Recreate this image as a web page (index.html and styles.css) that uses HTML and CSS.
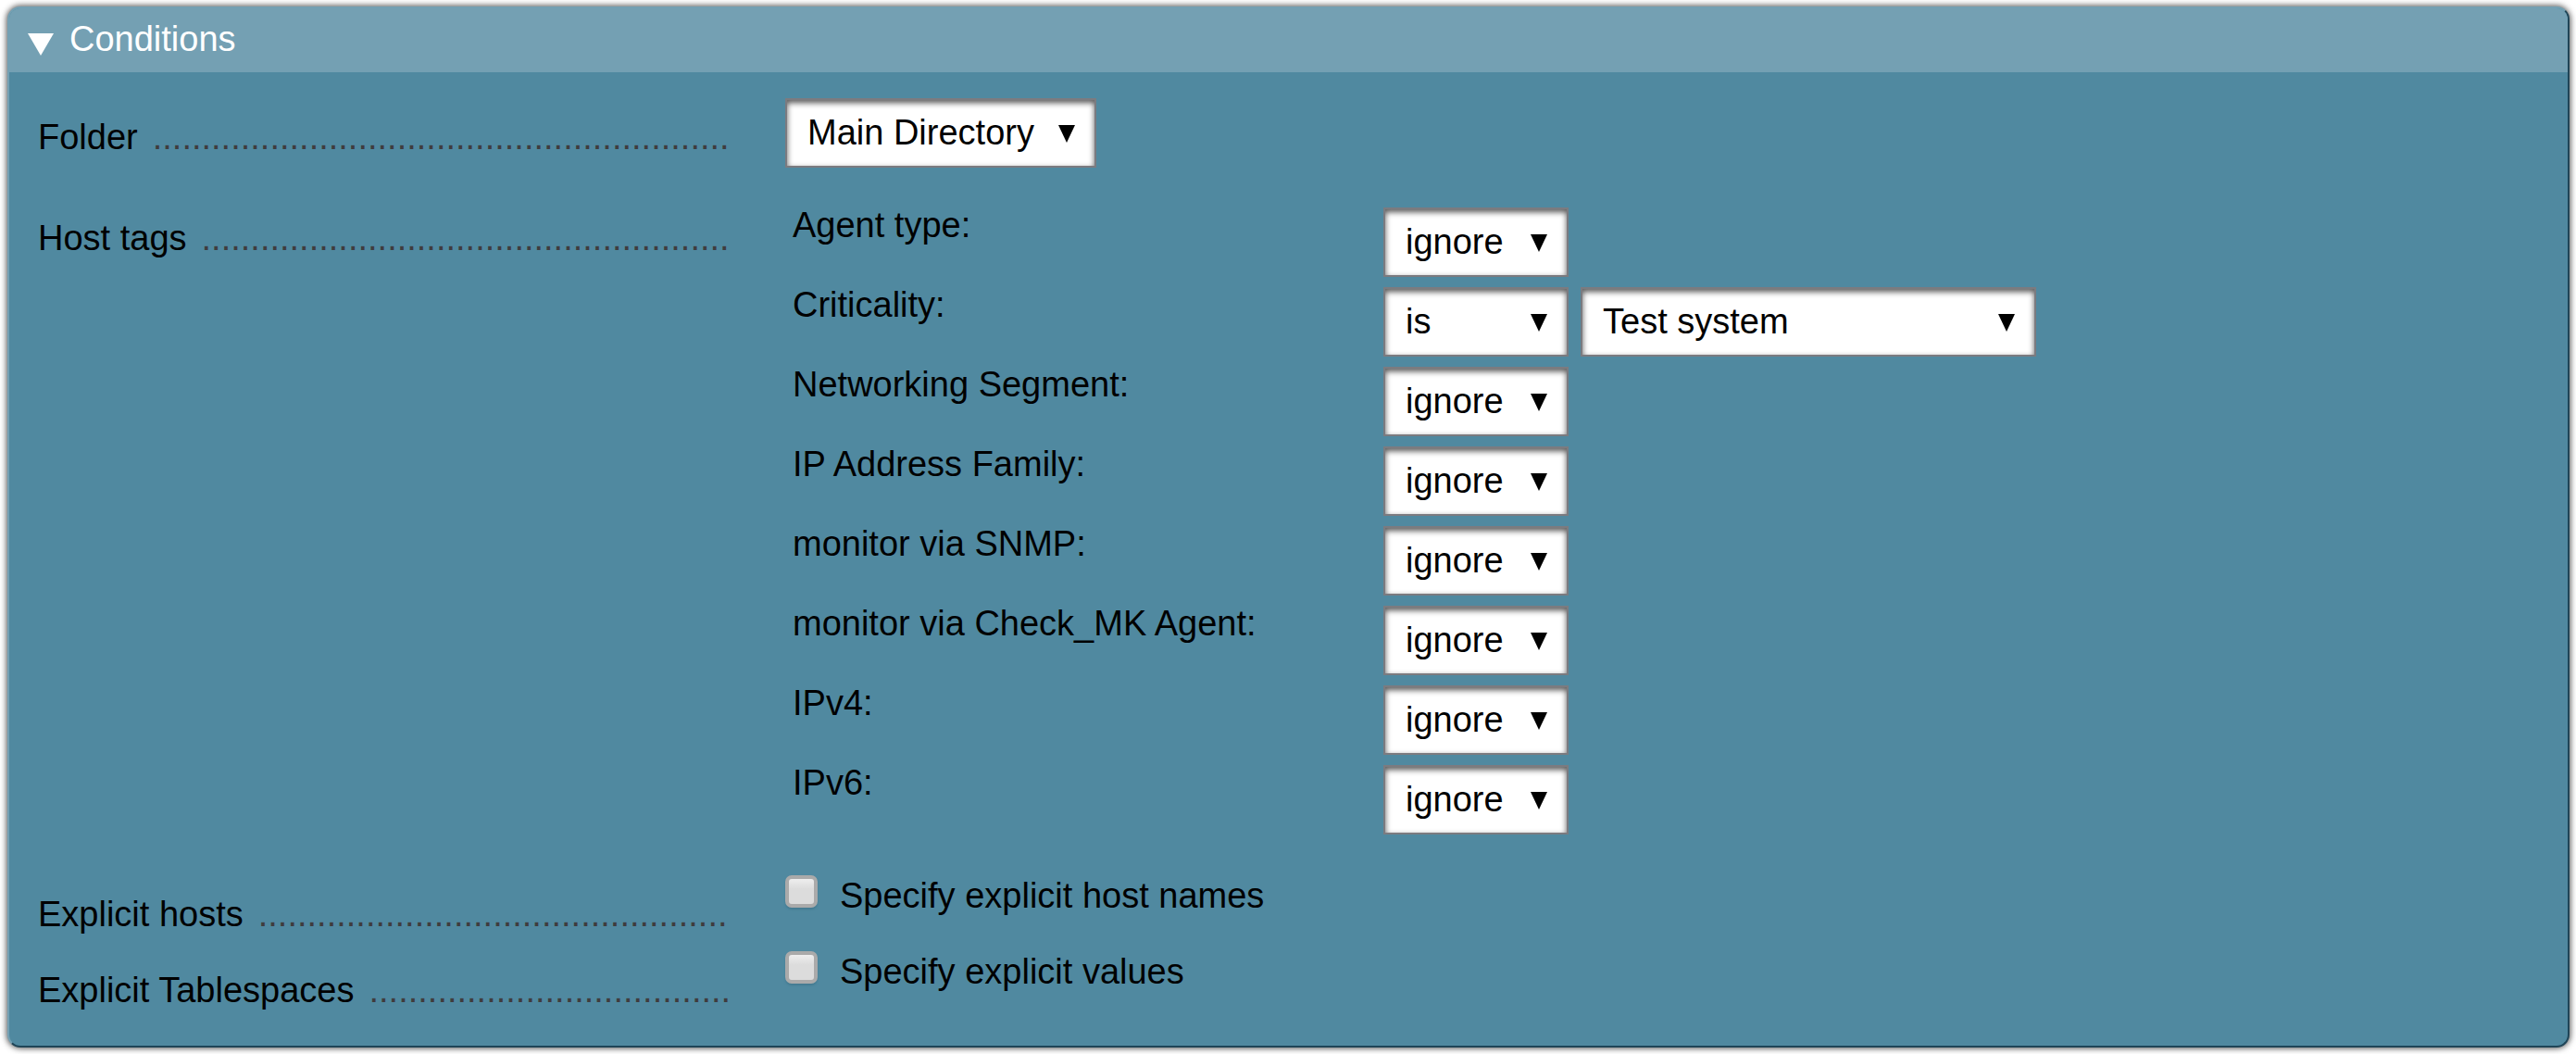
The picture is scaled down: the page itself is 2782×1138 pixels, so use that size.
FILE: index.html
```html
<!DOCTYPE html>
<html lang="en">
<head>
<meta charset="utf-8">
<title>Conditions</title>
<link rel="stylesheet" href="styles.css">
</head>
<body>
<form class="panel">
  <button class="panel-header" type="button" aria-expanded="true">
    <svg class="panel-toggle" viewBox="0 0 28 24" aria-hidden="true"><path d="M0 0H28L14 24Z"/></svg>
    <span>Conditions</span>
  </button>
  <div class="panel-body">
    <div class="row row-folder">
      <label class="legend" for="folder"><span>Folder</span><span class="dots" aria-hidden="true">...........................................................</span></label>
      <div class="field">
        <select id="folder" class="select select-folder"><option>Main Directory</option></select>
      </div>
    </div>
    <div class="row">
      <div class="legend"><span>Host tags</span><span class="dots" aria-hidden="true">......................................................</span></div>
      <div class="field tags">
        <div class="tag">
          <label for="agent">Agent type:</label>
          <select id="agent" class="select select-mode"><option>ignore</option><option>is</option></select>
        </div>
        <div class="tag">
          <label for="criticality">Criticality:</label>
          <select id="criticality" class="select select-mode"><option>is</option><option>ignore</option></select>
          <select class="select select-value" aria-label="Criticality value"><option>Test system</option></select>
        </div>
        <div class="tag">
          <label for="networking">Networking Segment:</label>
          <select id="networking" class="select select-mode"><option>ignore</option><option>is</option></select>
        </div>
        <div class="tag">
          <label for="family">IP Address Family:</label>
          <select id="family" class="select select-mode"><option>ignore</option><option>is</option></select>
        </div>
        <div class="tag">
          <label for="snmp">monitor via SNMP:</label>
          <select id="snmp" class="select select-mode"><option>ignore</option><option>is</option></select>
        </div>
        <div class="tag">
          <label for="cmk">monitor via Check_MK Agent:</label>
          <select id="cmk" class="select select-mode"><option>ignore</option><option>is</option></select>
        </div>
        <div class="tag">
          <label for="ipv4">IPv4:</label>
          <select id="ipv4" class="select select-mode"><option>ignore</option><option>is</option></select>
        </div>
        <div class="tag">
          <label for="ipv6">IPv6:</label>
          <select id="ipv6" class="select select-mode"><option>ignore</option><option>is</option></select>
        </div>
      </div>
    </div>
    <div class="row row-check">
      <div class="legend"><span>Explicit hosts</span><span class="dots" aria-hidden="true">................................................</span></div>
      <label class="field check"><input class="checkbox" type="checkbox"><span>Specify explicit host names</span></label>
    </div>
    <div class="row row-check">
      <div class="legend"><span>Explicit Tablespaces</span><span class="dots" aria-hidden="true">.....................................</span></div>
      <label class="field check"><input class="checkbox" type="checkbox"><span>Specify explicit values</span></label>
    </div>
  </div>
</form>
</body>
</html>
```
FILE: styles.css
```css
* {
  box-sizing: border-box;
}

body {
  margin: 0;
  padding: 7px 7px 7px 8px;
  background: #fff;
  color: #000;
  font: 38px/44px "Liberation Sans", Arial, sans-serif;
}

.panel {
  overflow: hidden;
  border: 2px solid;
  border-color: #74a0b3 #1f4557 #1f4557 #74a0b3;
  border-radius: 14px;
  background: #5089a0;
  box-shadow: 0 0 6px 1px #555;
}

.panel-header {
  display: flex;
  gap: 17px;
  width: 100%;
  padding: 11px 20px 14px;
  border: 0;
  background: #74a0b3;
  color: #fff;
  font: inherit;
  text-align: left;
}

.panel-toggle {
  width: 28px;
  height: 24px;
  margin-top: 16px;
  fill: currentColor;
}

.panel-body {
  padding: 28px 31px 20px;
}

.row {
  display: grid;
  grid-template-columns: 750px 1fr;
  column-gap: 57px;
}

.row-folder {
  padding-bottom: 34px;
}

.row-check {
  padding-bottom: 18px;
}

.legend {
  display: flex;
  gap: 16px;
  padding-top: 20px;
  white-space: nowrap;
}

.dots {
  color: #3f3c3e;
}

.select {
  appearance: none;
  height: 75px;
  margin: 0;
  padding: 0 50px 2px 22px;
  border: 2px solid #7b7b80;
  border-radius: 0;
  background: #fff url("data:image/svg+xml,%3Csvg xmlns='http://www.w3.org/2000/svg' width='18' height='19'%3E%3Cpath d='M0 0H18L9 19Z'/%3E%3C/svg%3E") no-repeat right 21px top 27px;
  box-shadow: inset 0 3px 6px #555;
  color: #000;
  font: inherit;
}

.select-folder {
  width: 336px;
}

.select-mode {
  width: 200px;
}

.select-value {
  width: 492px;
}

.tags {
  padding: 6px 0 36px 8px;
}

.tag {
  display: grid;
  grid-template-columns: 638px 200px 492px;
  height: 86px;
}

.tag .select {
  margin-top: 3px;
}

.tag .select-value {
  margin-left: 13px;
}

.check {
  display: flex;
  gap: 24px;
}

.checkbox {
  appearance: none;
  width: 35px;
  height: 35px;
  margin: 0;
  border: 4px solid #aaa;
  border-radius: 7px;
  background: linear-gradient(#eee, #dcdcdc 40%);
  box-shadow: 0 2px 2px #447b92;
}
```
